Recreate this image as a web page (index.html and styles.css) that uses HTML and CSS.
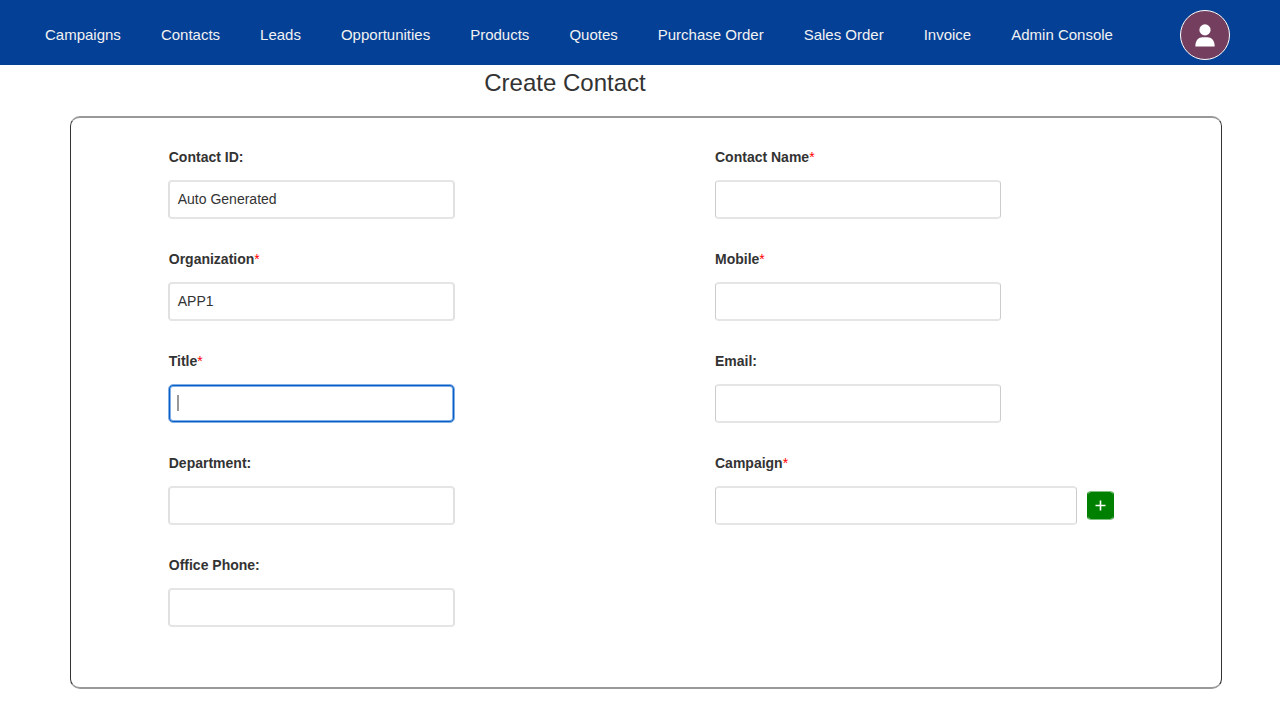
FILE: index.html
```html
<!DOCTYPE html>
<html lang="en">
<head>
<meta charset="utf-8">
<title>Create Contact</title>
<link rel="stylesheet" href="styles.css">
</head>
<body>
<header class="navbar">
  <nav class="nav-links">
    <a>Campaigns</a><a>Contacts</a><a>Leads</a><a>Opportunities</a><a>Products</a><a>Quotes</a><a>Purchase Order</a><a>Sales Order</a><a>Invoice</a><a>Admin Console</a>
  </nav>
  <div class="avatar">
    <svg width="20" height="23" viewBox="0 0 20 23" fill="#fff"><circle cx="10" cy="5.900" r="5.600"/><path d="M.4 22.500V21.500C.4 16.800 3.600 13.300 7.600 13.300h4.800c4 0 7.200 3.500 7.200 8.200v1z"/></svg>
  </div>
</header>
<h1 class="page-title">Create Contact</h1>
<form class="card">
  <div class="column column-left">
    <div class="field"><label class="label">Contact ID:</label><div class="input">Auto Generated</div></div>
    <div class="field"><label class="label">Organization<span class="required">*</span></label><div class="input">APP1</div></div>
    <div class="field"><label class="label">Title<span class="required">*</span></label><div class="input focused"><span class="caret"></span></div></div>
    <div class="field"><label class="label">Department:</label><div class="input"></div></div>
    <div class="field"><label class="label">Office Phone:</label><div class="input"></div></div>
  </div>
  <div class="column column-right">
    <div class="field"><label class="label">Contact Name<span class="required">*</span></label><div class="input"></div></div>
    <div class="field"><label class="label">Mobile<span class="required">*</span></label><div class="input"></div></div>
    <div class="field"><label class="label">Email:</label><div class="input"></div></div>
    <div class="field"><label class="label">Campaign<span class="required">*</span></label>
      <div class="input-row"><div class="input wide"></div><div class="add"><svg width="11" height="11" viewBox="0 0 11 11" stroke="#fff" stroke-width="1.600"><path d="M5.500 .5v10M.5 5.500h10"/></svg></div></div>
    </div>
  </div>
</form>
</body>
</html>
```
FILE: styles.css
```css
* { box-sizing: border-box; }
body {
  margin: 0;
  height: 720px;
  overflow: hidden;
  background: #fff;
  color: #333;
  font: 14px/20px "Liberation Sans", Arial, sans-serif;
}
.navbar {
  display: flex;
  justify-content: space-between;
  height: 65px;
  padding: 10px 50px 0 45px;
  background: #044096;
}
.nav-links {
  display: flex;
  gap: 40px;
  padding-top: 15px;
  color: #f2f2f2;
  font-size: 15px;
  white-space: nowrap;
}
.avatar {
  display: flex;
  justify-content: center;
  width: 50px;
  height: 50px;
  padding-top: 12.5px;
  border: 1px solid #fff;
  border-radius: 50%;
  background: #743f5e;
}
.page-title {
  width: 1130px;
  margin: 3px 0 18px;
  font-size: 24px;
  line-height: 30px;
  font-weight: 400;
  text-align: center;
}
.card {
  display: flex;
  width: 1152px;
  height: 573px;
  margin: 0 0 0 70px;
  padding: 29px 0 0 97px;
  border: 1px solid #333;
  border-top: 2px solid #999;
  border-bottom: 2px solid #999;
  border-radius: 10px;
}
.column-left { width: 547px; }
.field { height: 102px; }
.label {
  display: block;
  height: 33px;
  padding-left: 0.75px;
  font-weight: 700;
}
.column-right .label { padding-left: 0; }
.required {
  color: #f00;
  font-weight: 400;
}
.input {
  display: flex;
  align-items: center;
  width: 286px;
  height: 39px;
  padding: 0 8px 1px 8px;
  border: 1px solid #ccc;
  border-top: 2px solid #e5e5e5;
  border-bottom: 2px solid #e5e5e5;
  border-radius: 4px;
}
.column-left .input {
  width: 287px;
  padding-left: 7.75px;
  border-left: 2px solid #e1e1e1;
  border-right: 2px solid #e1e1e1;
}
.column-left .focused {
  padding: 0 8px 2px;
  border: 1px solid #83aee5;
  border-radius: 5px;
  box-shadow: inset 0 0 0 1px #0560c8, inset 0 0 0 2px #83aee5;
}
.caret {
  width: 2px;
  height: 16px;
  background: #999;
}
.input-row {
  display: flex;
  align-items: center;
  gap: 10px;
}
.wide { width: 362px; }
.add {
  display: flex;
  align-items: center;
  justify-content: center;
  width: 27px;
  height: 29px;
  border: 1px solid #008000;
  border-top-color: #7fbf7f;
  border-bottom-color: #7fbf7f;
  border-radius: 4px;
  background: #008000 padding-box;
}
```
